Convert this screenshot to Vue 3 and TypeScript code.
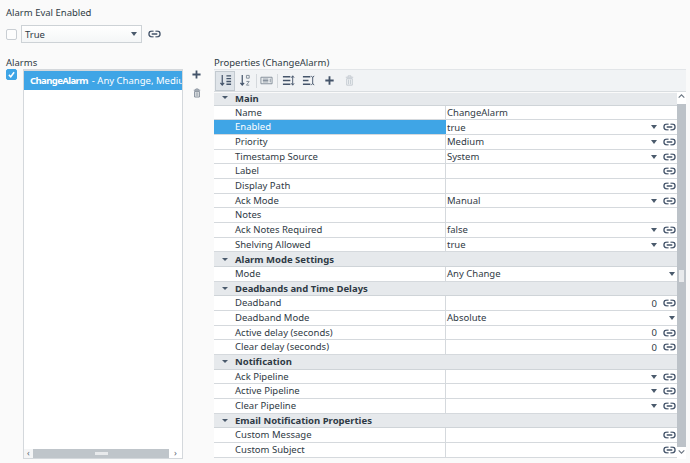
<script setup lang="ts">
interface Row { label: string; value?: string; kind?: 'head'; drop?: boolean; link?: boolean; num?: boolean; sel?: boolean }
const rows: Row[] = [
  { label: 'Main', kind: 'head' },
  { label: 'Name', value: 'ChangeAlarm' },
  { label: 'Enabled', value: 'true', drop: true, link: true, sel: true },
  { label: 'Priority', value: 'Medium', drop: true, link: true },
  { label: 'Timestamp Source', value: 'System', drop: true, link: true },
  { label: 'Label', link: true },
  { label: 'Display Path', link: true },
  { label: 'Ack Mode', value: 'Manual', drop: true, link: true },
  { label: 'Notes' },
  { label: 'Ack Notes Required', value: 'false', drop: true, link: true },
  { label: 'Shelving Allowed', value: 'true', drop: true, link: true },
  { label: 'Alarm Mode Settings', kind: 'head' },
  { label: 'Mode', value: 'Any Change', drop: true },
  { label: 'Deadbands and Time Delays', kind: 'head' },
  { label: 'Deadband', value: '0', num: true, link: true },
  { label: 'Deadband Mode', value: 'Absolute', drop: true },
  { label: 'Active delay (seconds)', value: '0', num: true, link: true },
  { label: 'Clear delay (seconds)', value: '0', num: true, link: true },
  { label: 'Notification', kind: 'head' },
  { label: 'Ack Pipeline', drop: true, link: true },
  { label: 'Active Pipeline', drop: true, link: true },
  { label: 'Clear Pipeline', drop: true, link: true },
  { label: 'Email Notification Properties', kind: 'head' },
  { label: 'Custom Message', link: true },
  { label: 'Custom Subject', link: true },
]
</script>

<template>
  <div class="page">
    <div class="title">Alarm Eval Enabled</div>
    <div class="eval">
      <span class="check"></span>
      <div class="select"><span>True</span><i class="tri"></i></div>
      <svg class="link big" viewBox="0 0 14 8"><use href="#lnk" /></svg>
    </div>
    <div class="main">
      <section class="left">
        <div class="cap">Alarms</div>
        <div class="left-body">
          <span class="check on">
            <svg viewBox="0 0 12 12"><path d="M2.500 6.500 5 9l4.500-6" fill="none" stroke="#fff" stroke-width="2" /></svg>
          </span>
          <div class="list">
            <div class="item"><b>ChangeAlarm</b><span class="rest">- Any Change, Medium</span></div>
            <div class="spacer"></div>
            <div class="hbar">
              <span class="arrow">‹</span>
              <span class="hthumb"><em></em></span>
              <span class="arrow wide">›</span>
            </div>
          </div>
          <div class="side">
            <svg class="plus" viewBox="0 0 10 10"><path d="M5 .5v9M.5 5h9" stroke="#44546a" stroke-width="2" /></svg>
            <svg class="trash" viewBox="0 0 10 12"><path d="M1 2.500h8M3.500 2.500V1h3v1.500M2 4h6v7H2z" fill="none" stroke="#7f8a96" stroke-width="1.200" /><path d="M4 5v5M6 5v5" stroke="#7f8a96" /></svg>
          </div>
        </div>
      </section>
      <section class="right">
        <div class="cap">Properties (ChangeAlarm)</div>
        <div class="toolbar">
          <span class="tb active">
            <svg viewBox="0 0 14 14"><path d="M3.500 1v11M1.500 9.500l2 2.500 2-2.500" fill="none" stroke="#44546a" stroke-width="1.300" /><path d="M8 2h5M8 5h5M8 8h5M8 11h5" stroke="#44546a" stroke-width="1.500" /></svg>
          </span>
          <span class="tb">
            <svg viewBox="0 0 14 14"><path d="M3.500 1v11M1.500 9.500l2 2.500 2-2.500" fill="none" stroke="#44546a" stroke-width="1.300" /><path d="M8 1.500h3v3H8zM8 8h3l-3 4h3" fill="none" stroke="#7f8a96" /></svg>
          </span>
          <i class="sep"></i>
          <span class="tb">
            <svg viewBox="0 0 14 14"><path d="M1 3.500h12v7H1z" fill="none" stroke="#7f8a96" /><path d="M3 5.500h6M3 7h6M3 8.500h6M11 5v4" stroke="#7f8a96" /></svg>
          </span>
          <i class="sep"></i>
          <span class="tb">
            <svg viewBox="0 0 14 14"><path d="M1 3h8M1 7h8M1 11h8" stroke="#44546a" stroke-width="1.500" /><path d="M11.500 2v10M10 4l1.500-2L13 4M10 10l1.500 2 1.500-2" fill="none" stroke="#44546a" /></svg>
          </span>
          <span class="tb">
            <svg viewBox="0 0 14 14"><path d="M1 3h8M1 7h6M1 11h8" stroke="#44546a" stroke-width="1.500" /><path d="M10 2l1.500 2L13 2M10 12l1.500-2 1.500 2M11.500 4v6" fill="none" stroke="#44546a" /></svg>
          </span>
          <span class="tb">
            <svg viewBox="0 0 14 14"><path d="M7 2.500v9M2.500 7h9" stroke="#44546a" stroke-width="2" /></svg>
          </span>
          <span class="tb">
            <svg viewBox="0 0 14 14"><path d="M3 3.500h8M5.500 3.500V2h3v1.500M4 5h6v7H4z" fill="none" stroke="#c3c9cf" /><path d="M6 6v5M8 6v5" stroke="#c3c9cf" /></svg>
          </span>
        </div>
        <div class="tablewrap">
          <div class="table">
            <div v-for="r in rows" :key="r.label" class="row" :class="{ head: r.kind === 'head', sel: r.sel }">
              <template v-if="r.kind === 'head'">
                <span class="gut"><i class="tri small"></i></span>
                <span class="hlabel">{{ r.label }}</span>
              </template>
              <template v-else>
                <span class="name">{{ r.label }}</span>
                <span class="val" :class="{ num: r.num }">
                  <span class="vt">{{ r.value }}</span>
                  <i v-if="r.drop" class="tri" :class="{ edge: !r.link }"></i>
                  <svg v-if="r.link" class="link" viewBox="0 0 14 8"><use href="#lnk" /></svg>
                </span>
              </template>
            </div>
          </div>
          <div class="vbar">
            <span class="btn"><svg viewBox="0 0 8 8"><path d="M1.500 5 4 2.500 6.500 5" fill="none" stroke="#6b7682" /></svg></span>
            <span class="vthumb"><em></em></span>
            <span class="btn"><svg viewBox="0 0 8 8"><path d="M1.500 3 4 5.500 6.500 3" fill="none" stroke="#6b7682" /></svg></span>
          </div>
        </div>
      </section>
    </div>
    <svg width="0" height="0" class="defs">
      <symbol id="lnk" viewBox="0 0 14 8">
        <path d="M6 1H4a3 3 0 0 0 0 6h2M8 1h2a3 3 0 0 1 0 6H8M4 4h6" fill="none" stroke="#44546a" stroke-width="1.400" />
      </symbol>
    </svg>
  </div>
</template>

<style>
html, body { margin: 0; background: #fafafa; }
</style>

<style scoped>
.page {
  width: 690px; height: 463px; box-sizing: border-box; overflow: hidden;
  padding: 6px 4px 0 6px; background: #fafafa; color: #2f3a45;
  font: 9.5px/13px "Noto Sans", sans-serif;
}
.defs { position: absolute; }
.title { height: 13px; }
.eval { display: flex; align-items: center; margin-top: 6px; height: 18px; }
.check { width: 11px; height: 11px; box-sizing: border-box; border: 1px solid #c9ced3; border-radius: 2px; background: #fdfdfd; display: block; flex: none; }
.check.on { background: #3fa5e6; border-color: #3fa5e6; }
.check.on svg { display: block; width: 9px; height: 9px; }
.select {
  margin-left: 4px; width: 121px; height: 18px; box-sizing: border-box; padding: 0 4px 0 3px;
  border: 1px solid #cdd2d6; background: linear-gradient(#fff, #f4f6f7); display: flex; align-items: center; justify-content: space-between;
}
.tri { display: block; flex: none; width: 0; height: 0; border-left: 3px solid transparent; border-right: 3px solid transparent; border-top: 4px solid #4a5a6c; }
.tri.small { border-top-width: 3px; }
.link { display: block; width: 13px; height: 8px; flex: none; margin-left: 6px; }
.main { display: flex; margin-top: 13px; }
.left { width: 208px; flex: none; }
.cap { height: 13px; }
.left-body { display: flex; align-items: flex-start; }
.list {
  margin-left: 6px; width: 160px; height: 390px; box-sizing: border-box; border: 1px solid #d4d8dc; border-top-width: 2px;
  background: #fff; display: flex; flex-direction: column;
}
.item { height: 19px; line-height: 19px; background: #3fa5e6; color: #fff; padding-left: 6px; white-space: nowrap; overflow: hidden; }
.item b { font-weight: 700; letter-spacing: -0.6px; }
.rest { margin-left: 4px; }
.spacer { flex: 1; }
.hbar { height: 9px; display: flex; background: #f4f5f6; }
.arrow { width: 9px; font-size: 9px; line-height: 8px; text-align: center; color: #5b6672; flex: none; }
.arrow.wide { width: 13px; background: #fff; }
.hthumb { flex: 1; background: #bfc5ca; display: flex; align-items: center; justify-content: center; }
.hthumb em { width: 13px; height: 3px; background: #e8eaec; display: block; }
.side { margin-left: 9px; display: flex; flex-direction: column; align-items: center; gap: 9px; padding-top: 1px; }
.plus { width: 9px; height: 9px; display: block; }
.trash { width: 8px; height: 10px; display: block; }
.right { width: 472px; flex: none; }
.toolbar {
  display: flex; align-items: center; height: 22px; padding-left: 1px; box-sizing: border-box;
  background: #f1f3f5; border-top: 1px solid #e2e5e8;
}
.tb { width: 20.400px; height: 20px; display: flex; align-items: center; justify-content: center; box-sizing: border-box; flex: none; }
.tb svg { width: 13px; height: 13px; display: block; }
.tb.active { background: #dfe4e9; border: 1px solid #c3cad0; }
.sep { width: 1px; height: 14px; background: #d4d8dc; flex: none; }
.tablewrap { display: flex; height: 367px; overflow: hidden; border-top: 1px solid #d9dde0; }
.table { width: 463px; flex: none; }
.row { height: 14.680px; box-sizing: border-box; display: flex; align-items: center; border-bottom: 1px solid #d5d9dd; white-space: nowrap; background: #fff; }
.row:first-child { height: 12.700px; margin-top: 1px; overflow: hidden; align-items: flex-start; }
.row:first-child .hlabel { margin-top: -1.500px; }
.row:first-child .gut { margin-top: 3px; }
.row.head { background: #e6e9ec; border-bottom: 1px solid #cfd4d8; }
.gut { width: 21px; display: flex; justify-content: center; flex: none; }
.hlabel { font-weight: 700; }
.name { width: 232px; box-sizing: border-box; padding-left: 21px; flex: none; border-right: 1px solid #d5d9dd; height: 100%; line-height: 13px; }
.val { flex: 1; display: flex; align-items: center; padding: 0 1px; height: 100%; min-width: 0; }
.vt { flex: 1; }
.num .vt { text-align: right; }
.val .tri.edge { margin-right: 1px; }
.sel { background: #3fa5e6; }
.sel .name { color: #fff; border-right-color: #3fa5e6; }
.sel .val { background: #fff; }
.vbar { width: 9px; flex: none; background: #bcc2c8; display: flex; flex-direction: column; }
.btn { height: 12px; background: #fff; display: block; }
.btn svg { width: 9px; height: 9px; display: block; }
.vthumb { flex: 1; display: flex; align-items: center; justify-content: center; }
.vthumb em { width: 5px; height: 12px; background: #e8eaec; display: block; }
</style>
